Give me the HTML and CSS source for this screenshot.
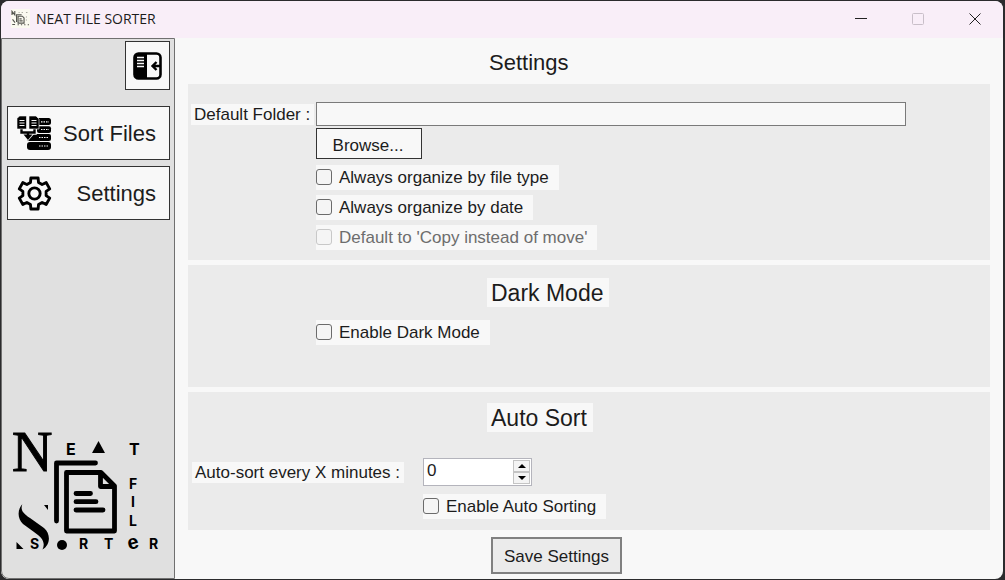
FILE: index.html
```html
<!DOCTYPE html>
<html lang="en">
  <head>
    <meta charset="UTF-8">
    <title>NEAT FILE SORTER</title>
    <link rel="stylesheet" href="styles.css">
  </head>

  <body>
    <div class="window">
      <header class="titlebar">
        <svg class="app-icon" viewBox="0 0 150 150" aria-hidden="true">
          <rect width="150" height="150" fill="#fbfaf0" />
          <g fill="none" stroke="#55554f" stroke-width="9">
            <path d="M44 103V45H84M56 57h34l13 13v42H56z" />
            <path d="M66 78h18M66 94h26" />
            <path d="M8 48V18l22 28V16M12 82l20 26M10 122h22M52 124h10M78 124h10M104 124h10M132 124h10" />
            <path d="M60 28h8M84 28h10M118 28h12M122 60v8M122 82v8" stroke="#a9a99f" />
          </g>
        </svg>
        <span class="app-name">NEAT FILE SORTER</span>
        <div class="window-buttons">
          <button aria-label="Minimize">
            <svg width="12" height="12" viewBox="0 0 12 12"><path d="M0 5.500h12" /></svg>
          </button>
          <button aria-label="Maximize" disabled>
            <svg width="12" height="12" viewBox="0 0 12 12"><rect x=".5" y=".5" width="11" height="11" rx="1" /></svg>
          </button>
          <button aria-label="Close">
            <svg width="12" height="12" viewBox="0 0 12 12"><path d="M.5.5l11 11M11.5.5l-11 11" /></svg>
          </button>
        </div>
      </header>

      <div class="content">
        <nav class="sidebar">
          <button class="toggle" aria-label="Collapse sidebar">
            <svg width="29" height="28" viewBox="0 0 29 28">
              <rect x="1.5" y="1.5" width="26" height="25" rx="4" fill="none" stroke="#000" stroke-width="2.6" />
              <path d="M2 5a3 3 0 0 1 3-3h9v24H5a3 3 0 0 1-3-3z" />
              <path d="M4 5.5h7M4 8.5h7M4 11.5h7M4 14.5h7" stroke="#f8f8f8" stroke-width="1.5" />
              <path d="M28 14h-8M23.5 10L19.5 14l4 4" fill="none" stroke="#000" stroke-width="2.4" />
            </svg>
          </button>

          <button class="nav-button">
            <svg width="35" height="35" viewBox="0 0 35 35">
              <g>
                <rect x="17" y="2" width="17" height="7" rx="2.5" />
                <rect x="20" y="10.3" width="14" height="6.7" rx="2" />
                <rect x="10" y="18" width="24" height="7" rx="2" />
                <rect x="10" y="26" width="24" height="8" rx="3" />
              </g>
              <path d="M24 5.800h8M24 13.500h8M22 21.500h10M22 30h10" stroke="#f8f8f8" stroke-width="1.2" stroke-dasharray="1.5 1" />
              <path d="M4.5 11v5.5H11V21M17.5 11v5.5H11" fill="none" stroke="#f8f8f8" stroke-width="4.5" />
              <path d="M5.5 18l5.500 7 6-7z" fill="#f8f8f8" />
              <path d="M4.5 11v5.5H11V21M17.5 11v5.5H11" fill="none" stroke="#000" stroke-width="2.400" />
              <path d="M6.500 18.500h9l-4.500 5.500z" />
              <path d="M0 2.5L2.5 0H9.500v13H0zM12 0h7l3 3v10H12z" stroke="#f8f8f8" stroke-width=".6" />
              <path d="M2.500 4.500h5M2.500 7h5M2.500 9.500h5M14.500 4.500h5M14.500 7h5M14.500 9.500h5" stroke="#f8f8f8" stroke-width="1.1" />
            </svg>
            Sort Files
          </button>

          <button class="nav-button">
            <svg width="35" height="35" viewBox="0 0 34 34" fill="none" stroke="#000" stroke-width="2.800" stroke-linejoin="round">
              <path d="M13.500 1.900H20.500L20.900 6.200L24.400 8.200L28.300 6.400L31.800 12.500L28.300 15V19L31.800 21.500L28.300 27.600L24.400 25.800L20.900 27.800L20.500 32.100H13.500L13.100 27.800L9.600 25.800L5.700 27.600L2.200 21.500L5.700 19V15L2.200 12.500L5.700 6.400L9.600 8.200L13.100 6.200Z" />
              <circle cx="17" cy="17" r="5.500" />
            </svg>
            Settings
          </button>

          <svg class="logo" width="150" height="126" viewBox="0 0 150 126" role="img" aria-label="Neat File Sorter">
            <text class="logo-serif" x="0" y="43" font-size="56">N</text>
            <g class="logo-sans" font-size="16">
              <text x="54" y="27">E</text>
              <text x="117" y="27">T</text>
            </g>
            <g class="logo-sans" font-size="14">
              <text x="117" y="61">F</text>
              <text x="119" y="79">I</text>
              <text x="117" y="98">L</text>
              <text x="18" y="121">S</text>
              <text x="67" y="121">R</text>
              <text x="92" y="121">T</text>
              <text x="137" y="121">R</text>
            </g>
            <text class="logo-e" x="116" y="121" font-size="20" transform="rotate(-14 121 117)">e</text>
            <path d="M80 25l6.500-12 6.500 12z" />
            <circle cx="50" cy="117" r="5" />
            <!-- swash down the left side -->
            <path d="M10.300 76.300C5 82 5.500 91 11 96L22 104C31 110 33.500 115 30.500 121.500C38.500 117 39 106 32 100L18 90C10 85 8.500 81 10.300 76.300Z" />
            <path d="M32 77h4v5zM4.500 114l7 7h-7z" />
            <g fill="none" stroke="#000" stroke-width="4.800" stroke-linecap="round" stroke-linejoin="round">
              <path d="M44.500 93V35H83.500" />
              <path d="M54.500 44.500H89L102.500 58V103H54.500ZM88.500 46V58.500H101" />
              <path d="M64 65.500H78.500M64 73.700H84M64 82H91" />
            </g>
          </svg>
        </nav>

        <main class="main">
          <h1 class="page-title">Settings</h1>

          <section class="panel folder-panel">
            <label class="chip" for="folder">Default Folder :</label>
            <input id="folder" class="folder-input" type="text">
            <div class="folder-options">
              <button class="browse">Browse...</button>
              <label class="check"><input type="checkbox">Always organize by file type</label>
              <label class="check"><input type="checkbox">Always organize by date</label>
              <label class="check disabled"><input type="checkbox" disabled>Default to 'Copy instead of move'</label>
            </div>
          </section>

          <section class="panel dark-panel">
            <h2 class="panel-title">Dark Mode</h2>
            <label class="check"><input type="checkbox">Enable Dark Mode</label>
          </section>

          <section class="panel auto-panel">
            <h2 class="panel-title">Auto Sort</h2>
            <div class="auto-grid">
              <label class="chip" for="minutes">Auto-sort every X minutes :</label>
              <div class="spinner">
                <input id="minutes" type="number" value="0" min="0">
                <div class="spinner-buttons">
                  <button aria-label="Increase"><svg width="8" height="4" viewBox="0 0 8 4"><path d="M0 4l4-4 4 4z" /></svg></button>
                  <button aria-label="Decrease"><svg width="8" height="4" viewBox="0 0 8 4"><path d="M0 0l4 4 4-4z" /></svg></button>
                </div>
              </div>
              <label class="check"><input type="checkbox">Enable Auto Sorting</label>
            </div>
          </section>

          <button class="save">Save Settings</button>
        </main>
      </div>
    </div>
  </body>
</html>
```

FILE: styles.css
```css
* {
  box-sizing: border-box;
}

body {
  margin: 0;
  padding: 1px 2px 1px 1px;
  min-height: 100vh;
  display: flex;
  background-color: #2b2b2d;
  color: #1c1c1c;
  font-family: "Liberation Sans", Arial, sans-serif;
  font-size: 17px;
}

button,
input {
  font-family: inherit;
  font-size: inherit;
  color: inherit;
  margin: 0;
}

.window {
  flex: 1;
  display: flex;
  flex-direction: column;
  background-color: #f8f8f8;
  border-radius: 8px;
  overflow: hidden;
}

/* Title bar */
.titlebar {
  display: flex;
  align-items: center;
  height: 37px;
  padding: 0 0 2px 10px;
  background-color: #f9eef8;
}

.app-icon {
  width: 19px;
  height: 19px;
}

.app-name {
  flex: 1;
  margin-left: 6px;
  font-family: "Open Sans", sans-serif;
  font-size: 14px;
}

.window-buttons {
  display: flex;
  align-self: stretch;
}

.window-buttons button {
  width: 57px;
  padding: 0;
  border: none;
  background: none;
}

.window-buttons svg {
  display: block;
  margin: 0 auto;
  fill: none;
  stroke: #222;
}

.window-buttons button:disabled svg {
  stroke: #c9bfc9;
}

.content {
  flex: 1;
  display: flex;
}

/* Sidebar */
.sidebar {
  width: 174px;
  display: flex;
  flex-direction: column;
  gap: 6px;
  padding: 2px 4px 24px 5px;
  background-color: #e0e0e0;
  border: 1px solid #707070;
  border-bottom-left-radius: 8px;
}

.toggle {
  align-self: flex-end;
  width: 45px;
  height: 49px;
  margin-bottom: 10px;
  padding: 0;
  border: 1px solid #333;
  background-color: #f8f8f8;
}

.toggle svg {
  display: block;
  margin: 0 auto;
}

.nav-button {
  display: flex;
  align-items: center;
  justify-content: space-between;
  height: 54px;
  padding: 1px 13px 0 9px;
  border: 1px solid #333;
  background-color: #f8f8f8;
  font-size: 22px;
}

.logo {
  margin: auto 0 0 5px;
  overflow: visible;
}

.logo-serif {
  font-family: "Liberation Serif", serif;
  stroke: #000;
  stroke-width: 1px;
}

.logo-sans {
  font-family: Inter, sans-serif;
  font-weight: bold;
}

.logo-e {
  font-family: "Liberation Sans", sans-serif;
  font-weight: bold;
}

/* Settings page */
.main {
  flex: 1;
  display: flex;
  flex-direction: column;
  gap: 5px;
  padding: 10px 13px 5px;
}

.page-title {
  margin: 0 0 1px 301px;
  font-size: 22px;
  font-weight: normal;
  line-height: 30px;
}

.panel {
  background-color: #ebebeb;
}

.panel-title {
  width: fit-content;
  margin: 0 0 0 299px;
  padding: 1px 6px 0 4px;
  background-color: #f8f8f8;
  font-size: 23px;
  font-weight: normal;
  line-height: 28px;
}

.chip {
  width: fit-content;
  padding: 0 4px 0 3px;
  background-color: #f8f8f8;
  line-height: 21px;
}

.check {
  display: flex;
  align-items: center;
  width: fit-content;
  padding-right: 10px;
  background-color: #f8f8f8;
  line-height: 25px;
}

.check input {
  appearance: none;
  width: 16px;
  height: 16px;
  margin: 0 7px 2px 0;
  border: 1px solid #6b6b6b;
  border-radius: 3px;
  background-color: #f5f5f5;
}

.check input:checked {
  background-color: #333;
}

.check.disabled {
  color: #6d6d6d;
}

.check.disabled input {
  border-color: #c8c8c8;
}

.folder-panel {
  display: grid;
  grid-template-columns: 125px 1fr;
  align-items: center;
  row-gap: 2px;
  padding: 18px 84px 10px 3px;
}

.folder-input {
  width: 100%;
  height: 24px;
  border: 1px solid #7a7a7a;
  border-radius: 0;
  background-color: #f8f8f8;
}

.folder-options {
  grid-column: 2;
  display: flex;
  flex-direction: column;
  gap: 5px;
}

.browse {
  width: 106px;
  height: 31px;
  margin-bottom: 1px;
  padding: 4px 2px 0 0;
  border: 1px solid #333;
  background-color: #f8f8f8;
}

.dark-panel {
  padding: 13px 0 42px;
}

.dark-panel .check {
  margin: 13px 0 0 128px;
}

.auto-panel {
  padding: 11px 0 11px;
}

.auto-grid {
  display: grid;
  grid-template-columns: 231px 1fr;
  align-items: center;
  row-gap: 8px;
  margin-top: 26px;
  padding-left: 4px;
}

.auto-grid .check {
  grid-column: 2;
}

.spinner {
  display: flex;
  width: 109px;
  height: 28px;
  padding: 1px;
  border: 1px solid #b4b4bc;
  background-color: #fff;
}

.spinner input {
  flex: 1;
  min-width: 0;
  padding: 0 0 2px 2px;
  border: none;
  appearance: textfield;
}

.spinner input::-webkit-inner-spin-button {
  appearance: none;
}

.spinner-buttons {
  display: flex;
  flex-direction: column;
  width: 17px;
}

.spinner-buttons button {
  flex: 1;
  padding: 0;
  border: 1px solid #c4c4c4;
  background-color: #f4f4f4;
}

.spinner-buttons svg {
  display: block;
  margin: 0 auto;
}

.save {
  align-self: flex-start;
  height: 37px;
  margin: 2px 0 0 303px;
  padding: 2px 11px 0;
  border: 2px solid #808080;
  background-color: #ebebeb;
}
```
